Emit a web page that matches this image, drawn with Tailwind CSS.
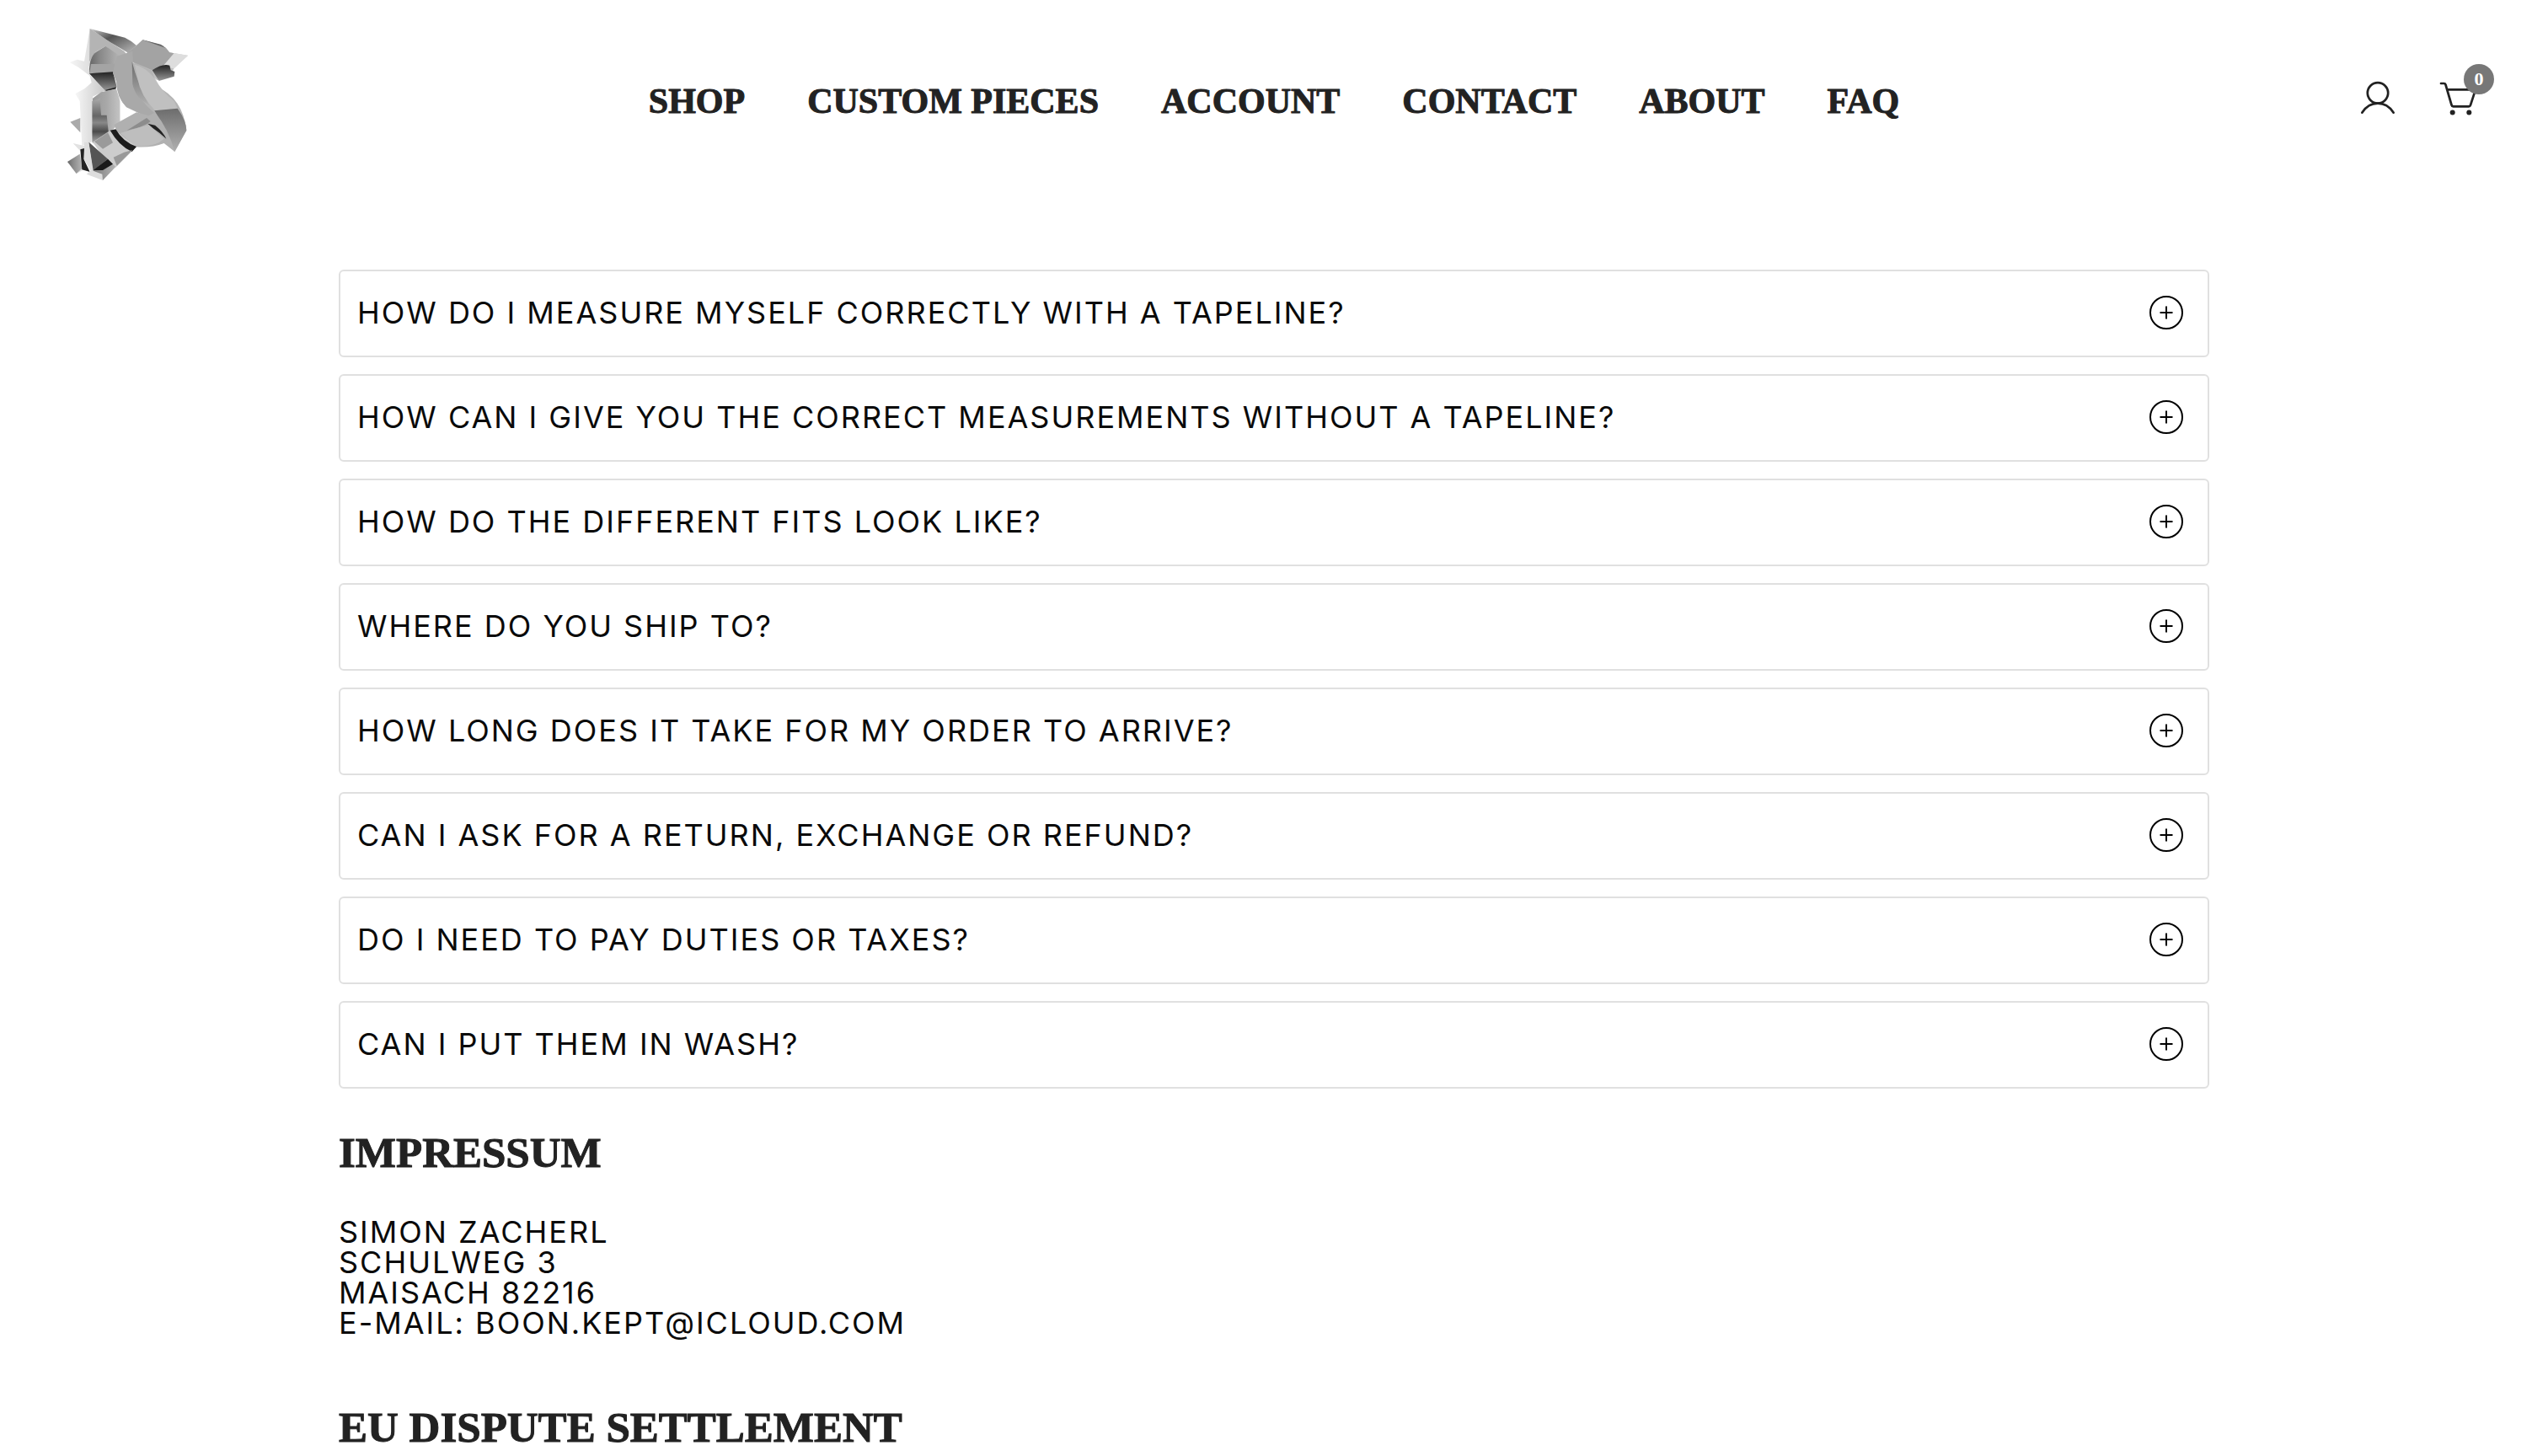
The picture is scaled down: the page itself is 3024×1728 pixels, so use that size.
<!DOCTYPE html>
<html lang="en">
<head>
  <meta charset="UTF-8" />
  <meta name="viewport" content="width=device-width, initial-scale=1" />
  <title>FAQ</title>
  <script src="https://cdn.jsdelivr.net/npm/@tailwindcss/browser@4"></script>
</head>
<body class="bg-white font-['Inter',sans-serif] text-[#0a0a0a]">

  <header class="grid grid-cols-[1fr_auto_1fr] items-center px-[60px] py-5">
    <a href="#" aria-label="Home" class="justify-self-start">
      <svg viewBox="0 0 540 600" class="w-[180px] h-[200px]">
        <defs>
          <linearGradient id="g1" x1="0" y1="0" x2="1" y2="1"><stop offset="0" stop-color="#ccc" /><stop offset=".4" stop-color="#555" /><stop offset="1" stop-color="#bbb" /></linearGradient>
          <linearGradient id="g2" x1="0" y1="0" x2="1" y2="0"><stop offset="0" stop-color="#f6f6f6" /><stop offset="1" stop-color="#c8c8c8" /></linearGradient>
          <linearGradient id="g3" x1="0" y1="0" x2="1" y2="0"><stop offset="0" stop-color="#999" /><stop offset=".5" stop-color="#a8a8a8" /><stop offset="1" stop-color="#c4c4c4" /></linearGradient>
          <linearGradient id="g4" x1="0" y1="0" x2="0" y2="1"><stop offset="0" stop-color="#222" /><stop offset="1" stop-color="#999" /></linearGradient>
          <linearGradient id="g5" x1="0" y1="0" x2="1" y2="1"><stop offset="0" stop-color="#999" /><stop offset=".5" stop-color="#bbb" /><stop offset="1" stop-color="#ccc" /></linearGradient>
          <linearGradient id="g6" x1="0" y1="0" x2="0" y2="1"><stop offset="0" stop-color="#6c6c6c" /><stop offset="1" stop-color="#b0b0b0" /></linearGradient>
          <linearGradient id="g7" x1="0" y1="0" x2="1" y2="0"><stop offset="0" stop-color="#666" /><stop offset=".35" stop-color="#888" /><stop offset="1" stop-color="#b4b4b4" /></linearGradient>
          <linearGradient id="g8" x1="0" y1="0" x2="0" y2="1"><stop offset="0" stop-color="#aaa" /><stop offset=".4" stop-color="#666" /><stop offset=".55" stop-color="#888" /><stop offset=".75" stop-color="#4a4a4a" /><stop offset="1" stop-color="#aaa" /></linearGradient>
        </defs>
        <!-- top left folds -->
        <path fill="url(#g2)" d="M140 42L205 92L160 125L136 178L140 210L100 180L68 162L95 152L120 158Z" />
        <path fill="#b4b4b4" d="M140 42L212 90L262 122L272 135L240 145L196 104L160 125L138 160Z" />
        <path fill="url(#g1)" d="M140 42L265 74Q290 86 306 102L276 128L212 90Z" />
        <path fill="url(#g7)" d="M196 104L245 138L230 200L138 202Q136 145 162 125Z" />
        <path fill="#a4a4a4" d="M144 168L230 168L222 196L138 202Z" />
        <path fill="url(#g4)" d="M138 202L222 196L236 250L194 264Z" />
        <path fill="#222" d="M194 261L234 250L232 258L200 264Z" />
        <!-- left stem -->
        <path fill="url(#g2)" d="M138 204L194 262L150 284L146 445L112 460L104 300L88 274L122 255L146 234Z" />
        <path fill="url(#g3)" d="M150 290L180 268L234 256L248 300L248 372L222 402L150 450Z" />
        <path fill="url(#g8)" d="M148 300L176 290L180 350L200 350L206 408L148 448Z" />
        <path fill="#aaa" d="M70 374L106 360L106 412Z" />
        <!-- right wing -->
        <path fill="url(#g5)" d="M328 82L400 102L420 126L488 138L440 182L426 210L380 226L290 160L272 128L306 104Z" />
        <path fill="#666" d="M328 82L392 98L412 112L372 104Z" />
        <path fill="#a3a3a3" d="M328 82L412 112L424 127L440 130L398 178L362 190L292 160L272 132Z" />
        <path fill="#ddd" d="M440 129L490 137L440 184L400 176Z" />
        <path fill="url(#g4)" d="M362 190Q400 164 424 173L428 190L442 195L440 212L386 228Z" />
        <!-- S curve -->
        <path fill="#b4b4b4" d="M290 162L362 192L380 250Q470 290 484 404L442 480L408 434L344 346L300 300Z" />
        <path fill="#a9a9a9" d="M236 140L292 122L296 240Q316 300 372 344L346 358L270 322Q236 290 234 230L222 200Z" />
        <path fill="url(#g6)" d="M290 160Q310 240 352 314Q304 292 292 240Z" />
        <path fill="#c0c0c0" d="M300 170Q340 180 372 220Q396 266 440 300L452 326L372 334Q320 280 310 220Z" />
        <path fill="url(#g6)" d="M370 334L452 326Q484 370 484 404L442 480L410 434Q400 380 370 334Z" />
        <path fill="#b0b0b0" d="M226 384L306 340L350 352L372 340Q420 400 442 480L404 450Q356 468 296 462L236 408Z" />
        <path fill="#8c8c8c" d="M272 404L342 360L356 372Q340 386 306 396Z" />
        <path fill="#bebebe" d="M248 414L350 384L404 434Q370 466 300 460Z" />
        <path fill="#222" d="M346 380L372 386Q400 408 412 434Q388 412 364 396Z" />
        <path fill="#fff" d="M248 294L272 326L300 340L248 370Z" />
        <!-- lower left shards -->
        <path fill="#ccc" d="M150 446L222 400L306 462L232 536L186 496Z" />
        <path fill="#9a9a9a" d="M156 444L204 412L222 448L186 470Z" />
        <path fill="#1c1c1c" d="M212 404L232 400Q258 446 306 462L290 480Q244 460 212 404Z" />
        <path fill="#999" d="M224 500L262 482L292 474L236 530Z" />
        <path fill="url(#g7)" d="M136 446L232 534L186 582L150 548Z" />
        <path fill="#1a1a1a" d="M150 546L204 506L222 524L186 546Z" />
        <path fill="#555" d="M136 446L204 506L152 546Z" />
        <path fill="#e2e2e2" d="M80 450L122 460L116 545L92 558L74 536L104 504L108 480Z" />
        <path fill="url(#g7)" d="M60 516L104 488L112 540L92 558Z" />
        <path fill="#222" d="M106 472L120 468L118 506L140 552L112 544Z" />
        <path fill="#ddd" d="M120 446L136 446L152 548L184 560L186 582L128 560L142 548L120 508Z" />
      </svg>
    </a>

    <nav class="flex gap-[74px] whitespace-nowrap font-['Liberation_Serif',serif] text-[42px] leading-[50px] font-bold text-[#222] [-webkit-text-stroke:1px_#222]">
      <a href="#">SHOP</a>
      <a href="#">CUSTOM PIECES</a>
      <a href="#">ACCOUNT</a>
      <a href="#">CONTACT</a>
      <a href="#">ABOUT</a>
      <a href="#">FAQ</a>
    </nav>

    <div class="mr-6 flex gap-[46px] justify-self-end text-[#222]">
      <a href="#" aria-label="Account">
        <svg viewBox="0 0 48 48" class="size-12" fill="none" stroke="currentColor" stroke-width="2.7" stroke-linecap="round">
          <circle cx="24" cy="14.3" r="12.2" />
          <path d="M5.3 37.7C10 30.5 16.5 26.7 24 26.7s14 3.8 18.7 11" />
        </svg>
      </a>
      <a href="#" aria-label="Cart" class="relative">
        <svg viewBox="0 0 48 48" class="size-12" fill="none" stroke="currentColor" stroke-width="2.7" stroke-linecap="round" stroke-linejoin="round">
          <path d="M5 3h3.5q1.500 0 2 1.500L17.500 28.500q.5 1.800 2 1.800h18.500q1.500 0 2-1.500L46 10.300H12.500" />
          <circle cx="18.7" cy="37.4" r="3" fill="currentColor" stroke="none" />
          <circle cx="38.3" cy="37.4" r="3" fill="currentColor" stroke="none" />
        </svg>
        <span class="absolute left-8 -top-5 flex size-9 items-center justify-center rounded-full bg-[#777] font-['Liberation_Serif',serif] text-[22px] leading-none font-bold text-white">0</span>
      </a>
    </div>
  </header>

  <main class="mx-auto w-full max-w-[2220px] pt-20 text-[36px] leading-9 tracking-[2px]">
    <div class="flex flex-col gap-5">
      <details class="rounded-md border-2 border-[#e0e0e0]">
        <summary class="flex cursor-pointer list-none items-center justify-between pt-[29px] pb-[31px] pr-[29px] pl-5">
          HOW DO I MEASURE MYSELF CORRECTLY WITH A TAPELINE?
          <svg viewBox="0 0 40 40" class="size-10" fill="none" stroke="#000" stroke-width="2"><circle cx="20" cy="20" r="19" /><path d="M20 12.5v15M12.5 20h15" /></svg>
        </summary>
      </details>
      <details class="rounded-md border-2 border-[#e0e0e0]">
        <summary class="flex cursor-pointer list-none items-center justify-between pt-[29px] pb-[31px] pr-[29px] pl-5">
          HOW CAN I GIVE YOU THE CORRECT MEASUREMENTS WITHOUT A TAPELINE?
          <svg viewBox="0 0 40 40" class="size-10" fill="none" stroke="#000" stroke-width="2"><circle cx="20" cy="20" r="19" /><path d="M20 12.5v15M12.5 20h15" /></svg>
        </summary>
      </details>
      <details class="rounded-md border-2 border-[#e0e0e0]">
        <summary class="flex cursor-pointer list-none items-center justify-between pt-[29px] pb-[31px] pr-[29px] pl-5">
          HOW DO THE DIFFERENT FITS LOOK LIKE?
          <svg viewBox="0 0 40 40" class="size-10" fill="none" stroke="#000" stroke-width="2"><circle cx="20" cy="20" r="19" /><path d="M20 12.5v15M12.5 20h15" /></svg>
        </summary>
      </details>
      <details class="rounded-md border-2 border-[#e0e0e0]">
        <summary class="flex cursor-pointer list-none items-center justify-between pt-[29px] pb-[31px] pr-[29px] pl-5">
          WHERE DO YOU SHIP TO?
          <svg viewBox="0 0 40 40" class="size-10" fill="none" stroke="#000" stroke-width="2"><circle cx="20" cy="20" r="19" /><path d="M20 12.5v15M12.5 20h15" /></svg>
        </summary>
      </details>
      <details class="rounded-md border-2 border-[#e0e0e0]">
        <summary class="flex cursor-pointer list-none items-center justify-between pt-[29px] pb-[31px] pr-[29px] pl-5">
          HOW LONG DOES IT TAKE FOR MY ORDER TO ARRIVE?
          <svg viewBox="0 0 40 40" class="size-10" fill="none" stroke="#000" stroke-width="2"><circle cx="20" cy="20" r="19" /><path d="M20 12.5v15M12.5 20h15" /></svg>
        </summary>
      </details>
      <details class="rounded-md border-2 border-[#e0e0e0]">
        <summary class="flex cursor-pointer list-none items-center justify-between pt-[29px] pb-[31px] pr-[29px] pl-5">
          CAN I ASK FOR A RETURN, EXCHANGE OR REFUND?
          <svg viewBox="0 0 40 40" class="size-10" fill="none" stroke="#000" stroke-width="2"><circle cx="20" cy="20" r="19" /><path d="M20 12.5v15M12.5 20h15" /></svg>
        </summary>
      </details>
      <details class="rounded-md border-2 border-[#e0e0e0]">
        <summary class="flex cursor-pointer list-none items-center justify-between pt-[29px] pb-[31px] pr-[29px] pl-5">
          DO I NEED TO PAY DUTIES OR TAXES?
          <svg viewBox="0 0 40 40" class="size-10" fill="none" stroke="#000" stroke-width="2"><circle cx="20" cy="20" r="19" /><path d="M20 12.5v15M12.5 20h15" /></svg>
        </summary>
      </details>
      <details class="rounded-md border-2 border-[#e0e0e0]">
        <summary class="flex cursor-pointer list-none items-center justify-between pt-[29px] pb-[31px] pr-[29px] pl-5">
          CAN I PUT THEM IN WASH?
          <svg viewBox="0 0 40 40" class="size-10" fill="none" stroke="#000" stroke-width="2"><circle cx="20" cy="20" r="19" /><path d="M20 12.5v15M12.5 20h15" /></svg>
        </summary>
      </details>
    </div>

    <h2 class="mt-[46px] font-['Liberation_Serif',serif] text-[51px] leading-[60px] font-bold tracking-normal text-[#222] [-webkit-text-stroke:1px_#222]">IMPRESSUM</h2>
    <p class="mt-[46px]">
      SIMON ZACHERL<br>
      SCHULWEG 3<br>
      MAISACH 82216<br>
      E-MAIL: BOON.KEPT@ICLOUD.COM
    </p>

    <h2 class="mt-[76px] font-['Liberation_Serif',serif] text-[51px] leading-[60px] font-bold tracking-normal text-[#222] [-webkit-text-stroke:1px_#222]">EU DISPUTE SETTLEMENT</h2>
  </main>

</body>
</html>
